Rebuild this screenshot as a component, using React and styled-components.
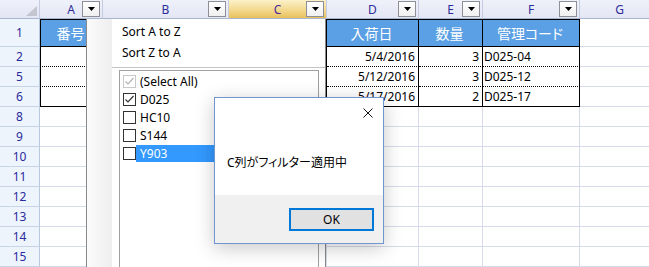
import styled, { createGlobalStyle } from "styled-components";

const GlobalStyle = createGlobalStyle`
  html, body {
    margin: 0;
    padding: 0;
    background: #fff;
  }
  body {
    font-family: "Noto Sans", "Noto Sans CJK JP", sans-serif;
    overflow: hidden;
  }
`;

const COLUMNS = ["A", "B", "C", "D", "E", "F", "G"];
const ROWS = [1, 2, 5, 6, 8, 9, 10, 11, 12, 13, 14, 15];

// table on the sheet, keyed by row number
const TABLE = {
  1: { head: true, bottom: "solid", cells: ["番号", "", "", "入荷日", "数量", "管理コード"] },
  2: { bottom: "dotted", cells: ["", "", "", "5/4/2016", "3", "D025-04"] },
  5: { bottom: "dotted", cells: ["", "", "", "5/12/2016", "3", "D025-12"] },
  6: { bottom: "solid", cells: ["", "", "", "5/17/2016", "2", "D025-17"] },
};
const ALIGN = ["left", "left", "left", "right", "right", "left"];

const FILTER_ITEMS = [
  { label: "(Select All)", checked: true, disabled: true },
  { label: "D025", checked: true },
  { label: "HC10" },
  { label: "S144" },
  { label: "Y903", selected: true },
];

const Sheet = styled.div`
  position: relative;
  width: 649px;
  height: 267px;
  overflow: hidden;
  background: #fff;
`;

const Grid = styled.div`
  display: grid;
  grid-template-columns: 40px 63px 126px 98px 92px 64px 97px 80px;
  grid-template-rows: 19px 28px repeat(12, 20px);
`;

const Corner = styled.div`
  box-sizing: border-box;
  display: flex;
  justify-content: flex-end;
  align-items: flex-end;
  padding: 0 2px 2px 0;
  background: linear-gradient(#eef0fa, #e3e6f4);
  border-right: 1px solid #c5cbe0;
  border-bottom: 1px solid #a9b6cf;
`;

const ColHeader = styled.div`
  position: relative;
  box-sizing: border-box;
  display: flex;
  align-items: center;
  justify-content: center;
  font-size: 12px;
  color: ${(p) => (p.$active ? "#4a2a9a" : "#2d2d9a")};
  background: ${(p) =>
    p.$active
      ? "linear-gradient(#fcf1c8, #f3d98f 55%, #e8c15c)"
      : "linear-gradient(#eff1fa, #e3e6f4)"};
  border-right: 1px solid #c5cbe0;
  border-bottom: 1px solid #a9b6cf;
`;

const DropButton = styled.div`
  position: absolute;
  right: 2px;
  top: 1px;
  width: 18px;
  height: 16px;
  box-sizing: border-box;
  border: 1px solid #8e8f96;
  background: linear-gradient(#ffffff, #f0f0f0);
  display: flex;
  align-items: center;
  justify-content: center;
`;

const RowHeader = styled.div`
  box-sizing: border-box;
  display: flex;
  align-items: center;
  justify-content: center;
  font-size: 12px;
  color: #2a2a9e;
  background: #eef4fc;
  border-right: 1px solid #b9c9dd;
  border-bottom: 1px solid #c8d4e6;
`;

const Cell = styled.div`
  box-sizing: border-box;
  display: flex;
  align-items: center;
  justify-content: ${(p) =>
    p.$head ? "center" : p.$align === "right" ? "flex-end" : "flex-start"};
  padding: 0 3px 0 1px;
  white-space: nowrap;
  overflow: hidden;
  font-size: ${(p) => (p.$head ? "14px" : "12px")};
  font-feature-settings: ${(p) => (p.$head ? '"palt"' : "normal")};
  color: ${(p) => (p.$head ? "#fff" : "#000")};
  background: ${(p) => (p.$head ? "#5b9fe4" : "#fff")};
  border-right: 1px solid ${(p) => (p.$table ? "#000" : "#d5dbe8")};
  border-bottom: 1px ${(p) => p.$bottom || "solid"} ${(p) => (p.$table ? "#000" : "#d5dbe8")};
  border-top: ${(p) => (p.$top ? "1px solid #000" : "none")};
  border-left: ${(p) => (p.$left ? "1px solid #000" : "none")};
`;

const FilterPopup = styled.div`
  position: absolute;
  left: 86px;
  top: 19px;
  width: 240px;
  height: 260px;
  box-sizing: border-box;
  border-left: 1px solid #8a8a8a;
  border-right: 1px solid #8a8a8a;
  background: #fff;
  display: flex;
  z-index: 2;
`;

const IconStrip = styled.div`
  width: 25px;
  flex-shrink: 0;
  background: linear-gradient(to right, #fbfbfb, #eeeeee);
`;

const PopupBody = styled.div`
  flex: 1;
  display: flex;
  flex-direction: column;
  padding-top: 2px;
`;

const MenuItem = styled.div`
  height: 21px;
  line-height: 21px;
  padding-left: 10px;
  font-size: 12px;
  color: #000;
`;

const Separator = styled.div`
  height: 1px;
  background: #c4c4c4;
  margin: 4px 0 2px 0;
`;

const ListBox = styled.div`
  flex: 1;
  width: 200px;
  margin-left: 7px;
  box-sizing: border-box;
  border: 1px solid #a0a0a0;
  padding-top: 1px;
`;

const ListItem = styled.div`
  height: 18px;
  display: flex;
  align-items: center;
  padding-left: 3px;
`;

const CheckBox = styled.div`
  width: 13px;
  height: 13px;
  box-sizing: border-box;
  flex-shrink: 0;
  border: 1px solid ${(p) => (p.$disabled ? "#c8c8c8" : "#333")};
  background: #fff;
  display: flex;
  align-items: center;
  justify-content: center;
`;

const ItemLabel = styled.div`
  flex: 1;
  height: 17px;
  line-height: 17px;
  padding: 0 4px;
  margin-right: 1px;
  font-size: 12px;
  color: ${(p) => (p.$selected ? "#fff" : "#000")};
  background: ${(p) => (p.$selected ? "#3399ff" : "transparent")};
`;

const Dialog = styled.div`
  position: absolute;
  left: 214px;
  top: 97px;
  width: 170px;
  height: 147px;
  box-sizing: border-box;
  border: 1px solid #7195d0;
  background: #fff;
  box-shadow: 0 4px 18px rgba(0, 0, 0, 0.22);
  display: flex;
  flex-direction: column;
  z-index: 3;
`;

const TitleBar = styled.div`
  height: 30px;
  display: flex;
  justify-content: flex-end;
  align-items: center;
  padding-right: 10px;
`;

const Message = styled.div`
  flex: 1;
  display: flex;
  align-items: center;
  padding-left: 12px;
  font-size: 12px;
  color: #000;
  font-feature-settings: "palt";
`;

const Footer = styled.div`
  height: 48px;
  background: #f0f0f0;
  display: flex;
  justify-content: flex-end;
  align-items: center;
  padding-right: 9px;
`;

const OkButton = styled.div`
  width: 85px;
  height: 23px;
  box-sizing: border-box;
  border: 2px solid #0078d7;
  background: #e1e1e1;
  display: flex;
  align-items: center;
  justify-content: center;
  font-size: 12px;
  color: #000;
`;

const DownArrow = () => (
  <svg width="7" height="4" viewBox="0 0 7 4">
    <polygon points="0,0 7,0 3.5,4" fill="#000" />
  </svg>
);

const Check = ({ color }) => (
  <svg width="11" height="11" viewBox="0 0 11 11">
    <polyline points="1.5,5.5 4,8 9.5,2" fill="none" stroke={color} strokeWidth="1.2" />
  </svg>
);

export default function App() {
  return (
    <>
      <GlobalStyle />
      <Sheet>
        <Grid>
          <Corner>
            <svg width="11" height="10" viewBox="0 0 11 10">
              <polygon points="11,0 11,10 0,10" fill="#c4c6cf" />
            </svg>
          </Corner>
          {COLUMNS.map((c) => (
            <ColHeader key={c} $active={c === "C"}>
              {c}
              {c !== "G" && (
                <DropButton>
                  <DownArrow />
                </DropButton>
              )}
            </ColHeader>
          ))}

          {ROWS.map((r) => {
            const t = TABLE[r];
            return [
              <RowHeader key={`h${r}`}>{r}</RowHeader>,
              ...COLUMNS.map((c, i) => {
                const inTable = t && i < 6;
                return (
                  <Cell
                    key={`${r}${c}`}
                    $table={inTable}
                    $head={inTable && t.head}
                    $top={inTable && r === 1}
                    $left={inTable && i === 0}
                    $bottom={inTable ? t.bottom : "solid"}
                    $align={ALIGN[i]}
                  >
                    {inTable ? t.cells[i] : ""}
                  </Cell>
                );
              }),
            ];
          })}
        </Grid>

        <FilterPopup>
          <IconStrip />
          <PopupBody>
            <MenuItem>Sort A to Z</MenuItem>
            <MenuItem>Sort Z to A</MenuItem>
            <Separator />
            <ListBox>
              {FILTER_ITEMS.map((item) => (
                <ListItem key={item.label}>
                  <CheckBox $disabled={item.disabled}>
                    {item.checked && <Check color={item.disabled ? "#b4b4b4" : "#333"} />}
                  </CheckBox>
                  <ItemLabel $selected={item.selected}>{item.label}</ItemLabel>
                </ListItem>
              ))}
            </ListBox>
          </PopupBody>
        </FilterPopup>

        <Dialog>
          <TitleBar>
            <svg width="10" height="10" viewBox="0 0 10 10">
              <path d="M0.5 0.5 L9.5 9.5 M9.5 0.5 L0.5 9.5" stroke="#111" strokeWidth="1" />
            </svg>
          </TitleBar>
          <Message>C列がフィルター適用中</Message>
          <Footer>
            <OkButton>OK</OkButton>
          </Footer>
        </Dialog>
      </Sheet>
    </>
  );
}
